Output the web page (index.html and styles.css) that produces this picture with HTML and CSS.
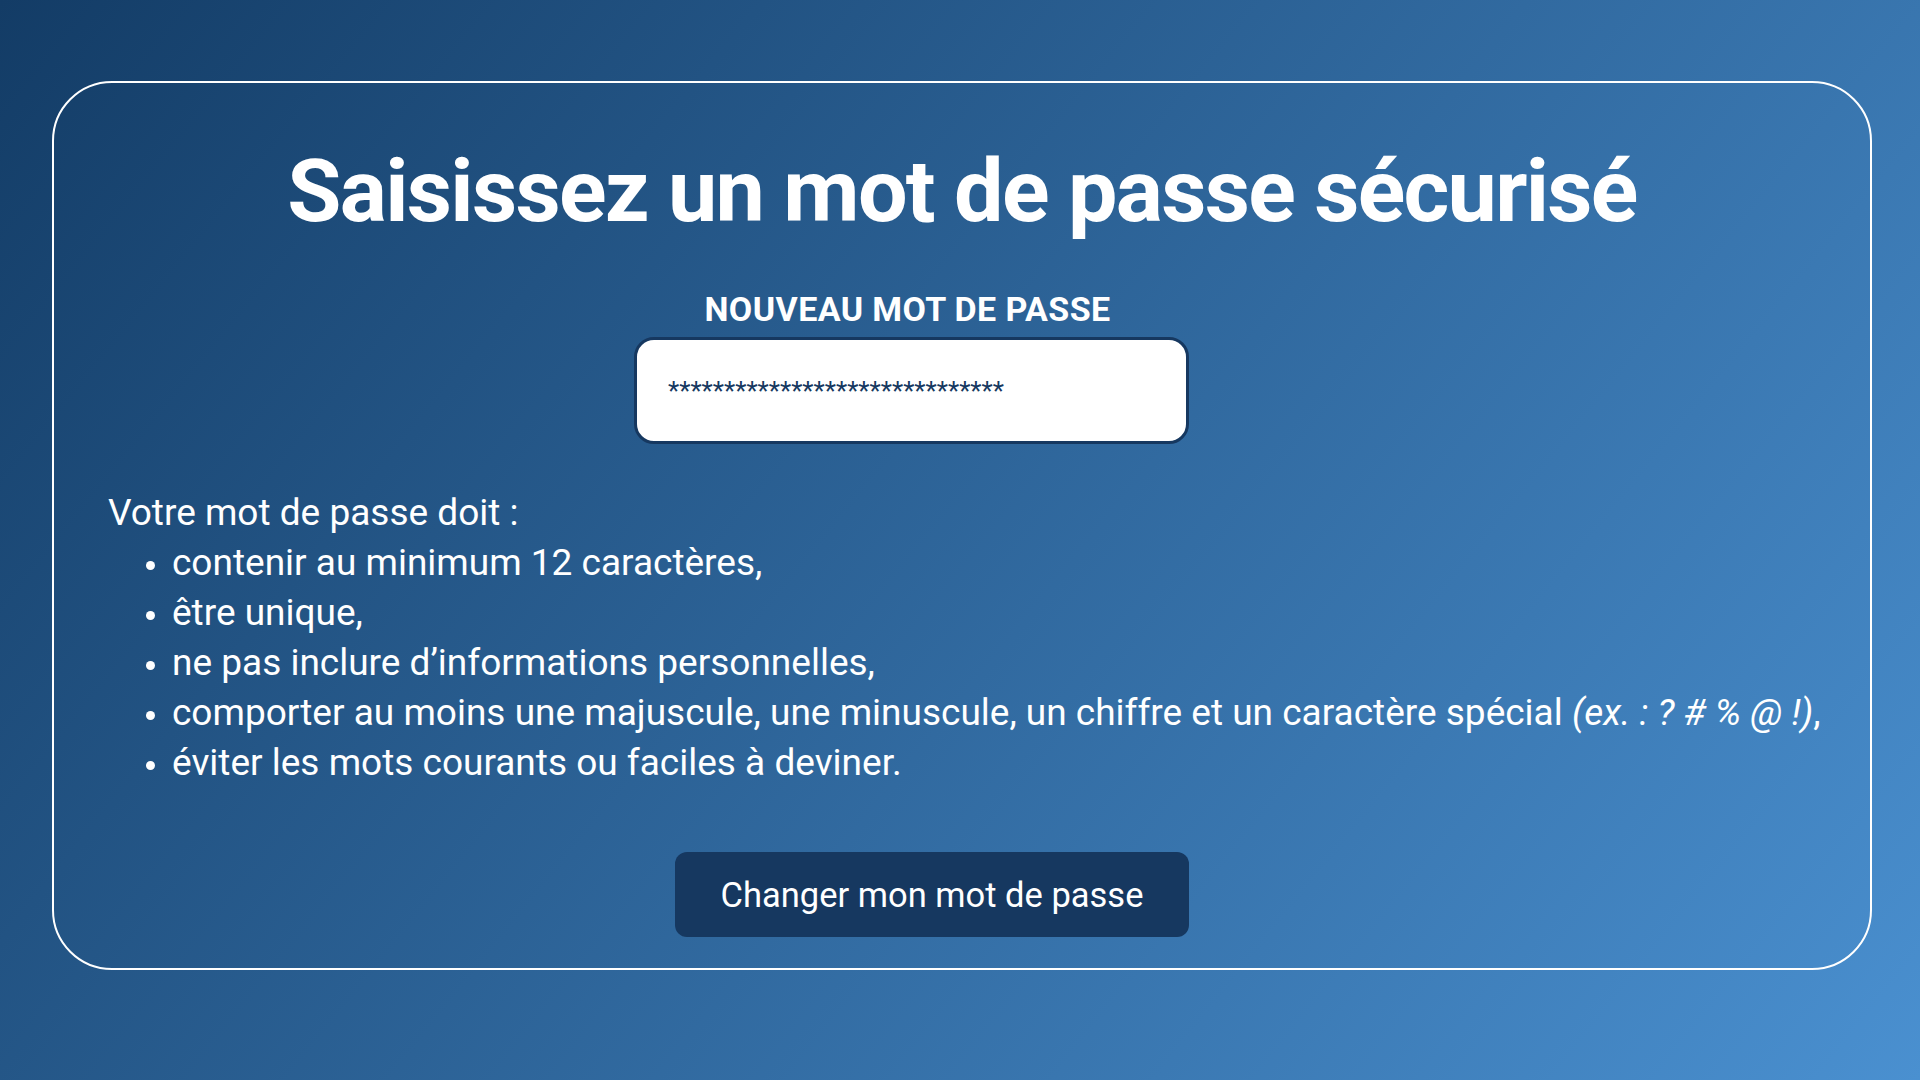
FILE: index.html
```html
<!DOCTYPE html>
<html lang="fr">
<head>
<meta charset="utf-8">
<title>Nouveau mot de passe</title>
<link rel="stylesheet" href="styles.css">
</head>
<body>
<main class="card">
  <h1 class="title">Saisissez un mot de passe sécurisé</h1>
  <div class="field">
    <label class="label" for="pwd">NOUVEAU MOT DE PASSE</label>
    <div class="input" id="pwd">******************************</div>
  </div>
  <div class="rules">
    <p class="intro">Votre mot de passe doit :</p>
    <ul class="list">
      <li>contenir au minimum 12 caractères,</li>
      <li>être unique,</li>
      <li>ne pas inclure d’informations personnelles,</li>
      <li>comporter au moins une majuscule, une minuscule, un chiffre et un caractère spécial <em>(ex. : ? # % @ !)</em>,</li>
      <li>éviter les mots courants ou faciles à deviner.</li>
    </ul>
  </div>
  <button class="btn" type="button">Changer mon mot de passe</button>
</main>
</body>
</html>
```

FILE: styles.css
```css
* { box-sizing: border-box; }
html, body { margin: 0; padding: 0; }
body {
  width: 1920px;
  height: 1080px;
  overflow: hidden;
  background: linear-gradient(129deg, #133c66 0%, #4a90d0 100%);
  font-family: Roboto, "Liberation Sans", sans-serif;
  color: #ffffff;
  padding: 81px 48px 0 52px;
}
.card {
  height: 889px;
  border: 2px solid #ffffff;
  border-radius: 60px;
  padding-top: 54px;
}
.title {
  margin: 0;
  font-size: 88px;
  line-height: 108px;
  font-weight: 700;
  text-align: center;
  letter-spacing: -1.7px;
}
.field {
  margin: 46px 0 0 580px;
  width: 555px;
}
.label {
  display: block;
  font-size: 34px;
  line-height: 36px;
  font-weight: 700;
  text-align: center;
  padding-right: 8px;
  letter-spacing: 0.4px;
}
.input {
  margin-top: 10px;
  height: 107px;
  background: #ffffff;
  border: 3px solid #163860;
  border-radius: 20px;
  padding-left: 31px;
  display: flex;
  align-items: center;
  color: #163860;
  font-size: 26px;
  line-height: 30px;
}
.rules {
  margin-top: 44px;
  padding-left: 54px;
  font-size: 37px;
  line-height: 50px;
}
.intro { margin: 0; }
.list {
  margin: 0;
  padding: 0 0 0 64px;
  list-style: none;
}
.list li::before {
  content: "";
  display: inline-block;
  width: 9px;
  height: 9px;
  border-radius: 50%;
  background: #ffffff;
  vertical-align: middle;
  margin: 0 17px 0 -26px;
}
.list em { font-style: italic; }
.btn {
  display: block;
  margin: 64px 0 0 621px;
  width: 514px;
  height: 85px;
  background: #163860;
  border: none;
  border-radius: 12px;
  color: #ffffff;
  font-family: Roboto, "Liberation Sans", sans-serif;
  font-size: 34.5px;
  padding: 0;
}
```
